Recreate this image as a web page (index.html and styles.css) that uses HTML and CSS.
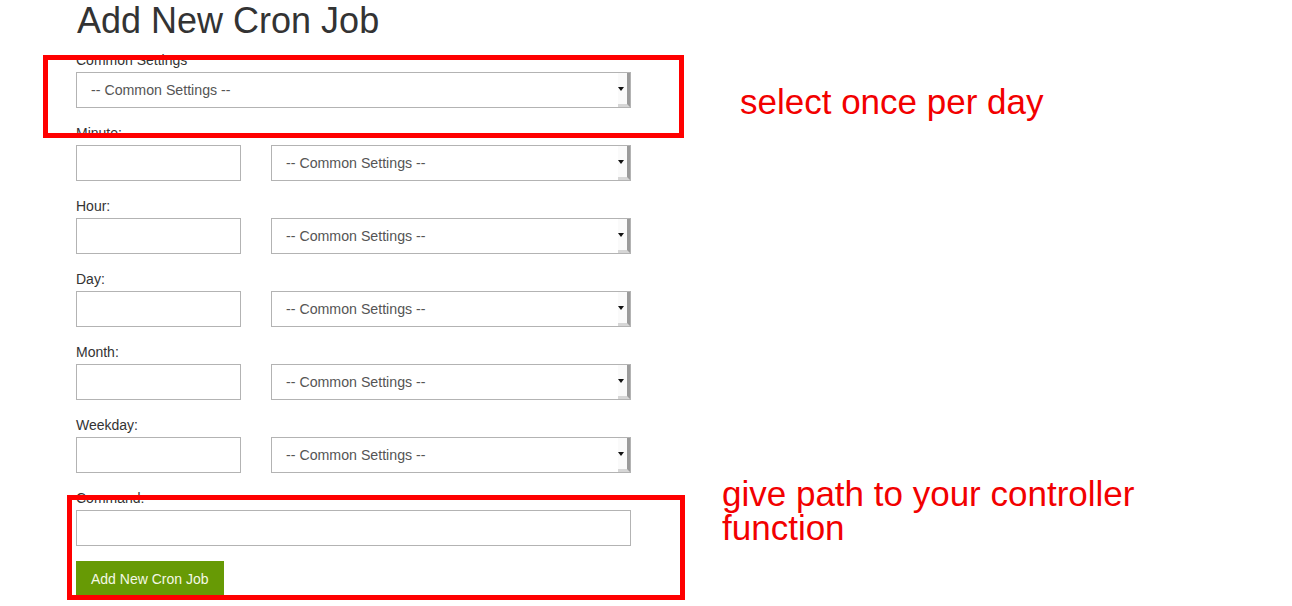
FILE: index.html
```html
<!DOCTYPE html>
<html>
<head>
<meta charset="utf-8">
<title>Add New Cron Job</title>
<link rel="stylesheet" href="styles.css">
</head>
<body>
<main class="page">
  <h1 class="title">Add New Cron Job</h1>
  <form class="cron-form">
    <div class="field">
      <label class="label">Common Settings</label>
      <div class="select select-wide"><span class="select-text">-- Common Settings --</span><span class="select-btn"></span></div>
    </div>
    <div class="field">
      <label class="label">Minute:</label>
      <div class="pair">
        <div class="input input-short"></div>
        <div class="select select-mid"><span class="select-text">-- Common Settings --</span><span class="select-btn"></span></div>
      </div>
    </div>
    <div class="field">
      <label class="label">Hour:</label>
      <div class="pair">
        <div class="input input-short"></div>
        <div class="select select-mid"><span class="select-text">-- Common Settings --</span><span class="select-btn"></span></div>
      </div>
    </div>
    <div class="field">
      <label class="label">Day:</label>
      <div class="pair">
        <div class="input input-short"></div>
        <div class="select select-mid"><span class="select-text">-- Common Settings --</span><span class="select-btn"></span></div>
      </div>
    </div>
    <div class="field">
      <label class="label">Month:</label>
      <div class="pair">
        <div class="input input-short"></div>
        <div class="select select-mid"><span class="select-text">-- Common Settings --</span><span class="select-btn"></span></div>
      </div>
    </div>
    <div class="field">
      <label class="label">Weekday:</label>
      <div class="pair">
        <div class="input input-short"></div>
        <div class="select select-mid"><span class="select-text">-- Common Settings --</span><span class="select-btn"></span></div>
      </div>
    </div>
    <div class="field">
      <label class="label">Command:</label>
      <div class="input input-wide"></div>
    </div>
    <div class="actions">
      <span class="btn">Add New Cron Job</span>
    </div>
  </form>

  <div class="mark mark-top"></div>
  <div class="mark mark-bottom"></div>
  <p class="note note-top">select once per day</p>
  <div class="note note-bottom">
    <span class="note-line">give path to your controller</span>
    <span class="note-line">function</span>
  </div>
</main>
</body>
</html>
```

FILE: styles.css
```css
html, body {
  margin: 0;
  padding: 0;
  background: #ffffff;
}

body {
  font-family: "Liberation Sans", Arial, sans-serif;
  color: #333333;
  font-size: 14px;
}

.page {
  position: relative;
  width: 1292px;
  height: 606px;
  overflow: hidden;
  box-sizing: border-box;
  padding-left: 76px;
  padding-top: 1px;
}

.title {
  margin: 0;
  font-size: 36px;
  font-weight: 400;
  line-height: 40px;
  color: #333333;
  padding-left: 1px;
}

.cron-form {
  margin-top: 9px;
  display: flex;
  flex-direction: column;
  gap: 15px;
}

.field {
  display: flex;
  flex-direction: column;
}

.label {
  display: block;
  line-height: 20px;
  height: 20px;
  margin-bottom: 2px;
  font-size: 14px;
  color: #333333;
}

.pair {
  display: flex;
  gap: 30px;
}

.input,
.select {
  box-sizing: border-box;
  height: 36px;
  border: 1px solid #b3b3b3;
  background: #ffffff;
}

.input-short { width: 165px; }
.input-wide { width: 555px; }

.select {
  position: relative;
  display: flex;
  align-items: center;
  padding-left: 14px;
  color: #555555;
}

.select-wide { width: 555px; }
.select-mid { width: 360px; }

.select-text {
  font-size: 14.2px;
  line-height: 20px;
}

.select-btn {
  position: absolute;
  right: 0;
  top: 0;
  bottom: 0;
  width: 12px;
  box-sizing: border-box;
  border-right: 3px solid #9a9a9a;
  border-bottom: 3px solid #d6d6d6;
  background: #fafafa;
}

.select-btn::after {
  content: "";
  position: absolute;
  left: 0;
  top: 14px;
  width: 0;
  height: 0;
  border-left: 3px solid transparent;
  border-right: 3px solid transparent;
  border-top: 4px solid #111111;
}

.actions {
  display: flex;
}

.btn {
  display: inline-flex;
  align-items: center;
  box-sizing: border-box;
  height: 35px;
  padding: 0 15px;
  background: #679a05;
  color: #f4f8e6;
  font-size: 14px;
}

.mark {
  position: absolute;
  box-sizing: border-box;
  border: 5px solid #ff0000;
}

.mark-top {
  left: 43px;
  top: 55px;
  width: 641px;
  height: 83px;
}

.mark-bottom {
  left: 67px;
  top: 495px;
  width: 618px;
  height: 105px;
}

.note {
  position: absolute;
  margin: 0;
  color: #f20000;
  font-size: 35px;
  line-height: 34px;
  font-family: "Liberation Sans", Arial, sans-serif;
}

.note-top {
  left: 740px;
  top: 85px;
}

.note-bottom {
  left: 722px;
  top: 477px;
  display: flex;
  flex-direction: column;
}

.note-line {
  display: block;
  height: 34px;
  line-height: 34px;
}
```
